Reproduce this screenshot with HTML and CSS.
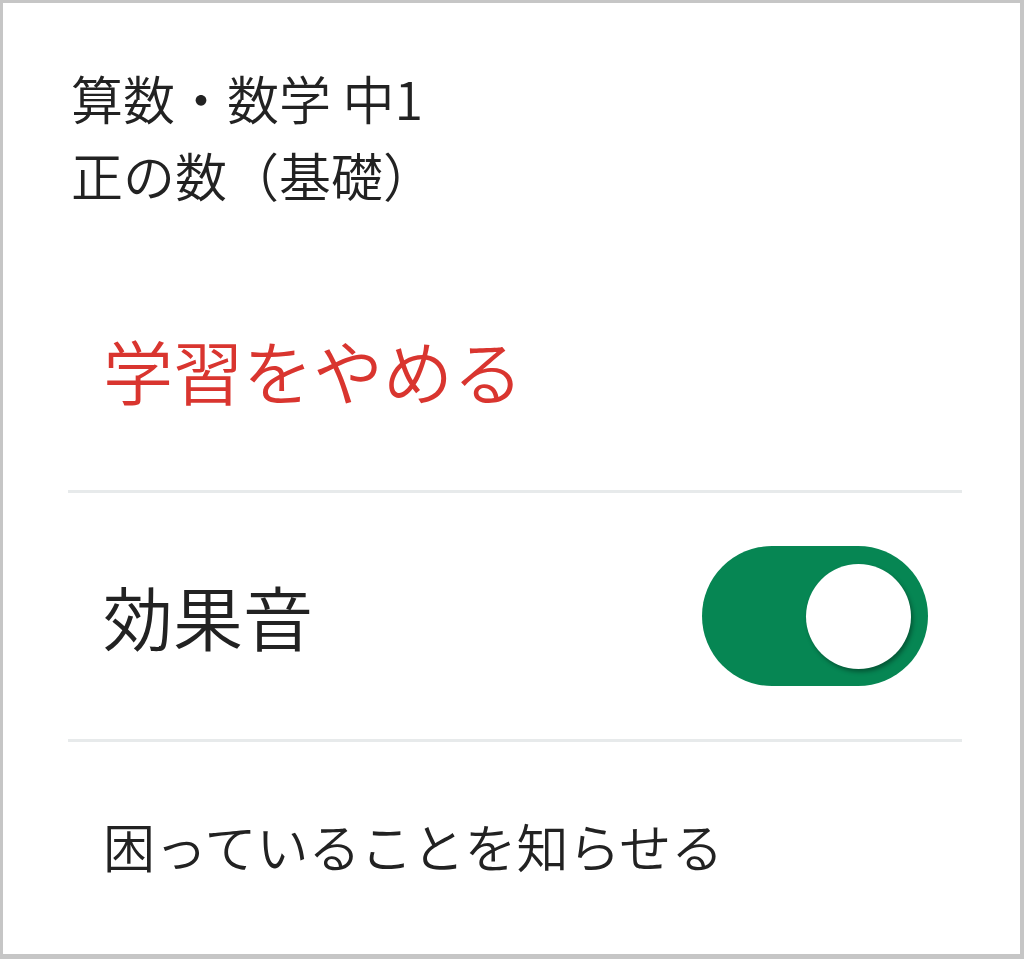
FILE: index.html
```html
<!DOCTYPE html>
<html lang="ja">
<head>
<meta charset="utf-8">
<link rel="stylesheet" href="styles.css">
</head>
<body>
<div class="card">
  <div class="header">
    <div class="subject">算数・数学 中1</div>
    <div class="unit">正の数（基礎）</div>
  </div>
  <div class="menu">
    <div class="row row-quit">学習をやめる</div>
    <div class="row row-sound">
      <span class="label">効果音</span>
      <span class="toggle"><span class="knob"></span></span>
    </div>
    <div class="row row-help">困っていることを知らせる</div>
  </div>
</div>
</body>
</html>
```
FILE: styles.css
```css
html, body {
  margin: 0;
  padding: 0;
  background: #ffffff;
}
.card {
  box-sizing: border-box;
  width: 1024px;
  height: 959px;
  border-style: solid;
  border-color: #c6c6c6;
  border-width: 3px 4px 5px 3px;
  background: #ffffff;
  font-family: "Noto Sans CJK JP", "Noto Sans", sans-serif;
  font-weight: 350;
  color: #222222;
  text-spacing-trim: space-all;
}
.header {
  padding: 56px 0 0 68px;
  font-size: 52px;
  line-height: 77px;
  color: #222222;
}
.menu {
  margin: 39px 58px 0 65px;
}
.row {
  padding-left: 35px;
}
.row-quit {
  padding-top: 78px;
  padding-bottom: 80px;
  font-size: 70px;
  line-height: 80px;
  color: #d9352f;
  border-bottom: 3px solid #e7eaeb;
}
.row-sound {
  display: flex;
  align-items: center;
  justify-content: space-between;
  padding-top: 53px;
  padding-bottom: 53px;
  padding-right: 34px;
  border-bottom: 3px solid #e7eaeb;
}
.label {
  font-size: 70px;
  line-height: 80px;
}
.toggle {
  position: relative;
  display: block;
  width: 226px;
  height: 140px;
  border-radius: 70px;
  background: #068653;
}
.knob {
  position: absolute;
  top: 18px;
  right: 17px;
  width: 105px;
  height: 105px;
  border-radius: 50%;
  background: #ffffff;
  box-shadow: 2px 3px 4px rgba(0, 0, 0, 0.35);
}
.row-help {
  padding-top: 78px;
  font-size: 52px;
  line-height: 52px;
}
```
